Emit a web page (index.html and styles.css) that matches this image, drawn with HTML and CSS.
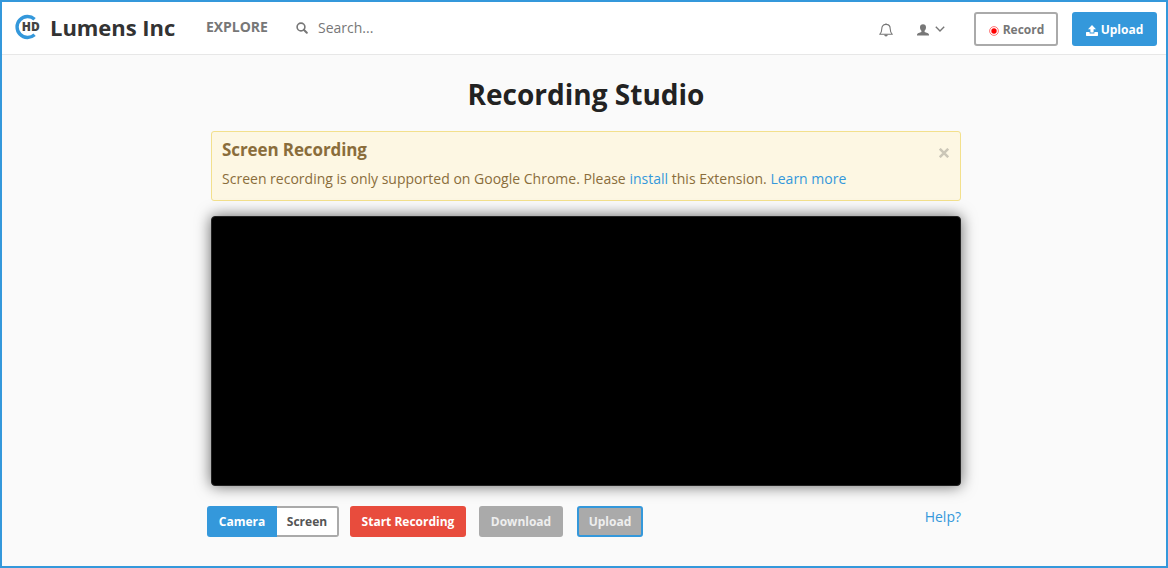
FILE: index.html
```html
<!DOCTYPE html>
<html lang="en">
<head>
<meta charset="utf-8">
<title>Recording Studio</title>
<link rel="stylesheet" href="styles.css">
</head>
<body>
<div class="app">
  <header class="topbar">
    <svg class="logo" viewBox="0 0 26 26" width="26" height="26">
      <path d="M20.6 5.2A10.5 10.5 0 1 0 20.6 20.8" fill="none" stroke="#3498db" stroke-width="3.4"/>
      <text class="logo-text" x="7.8" y="17.2" textLength="18" lengthAdjust="spacingAndGlyphs">HD</text>
    </svg>
    <span class="brand">Lumens Inc</span>
    <a class="explore">EXPLORE</a>
    <svg class="search-icon" viewBox="0 0 12 12" width="12" height="12">
      <circle cx="5" cy="5" r="3.9" fill="none" stroke="#777" stroke-width="1.6"/>
      <path d="M7.8 7.8L10.8 10.8" stroke="#777" stroke-width="2" stroke-linecap="round"/>
    </svg>
    <span class="search">Search...</span>
    <svg class="bell" viewBox="0 0 14 14" width="14" height="14">
      <path d="M7 .3V1.3M.7 11.3C2.3 9.9 2.8 8.5 2.8 5.8C2.8 3 4.3 1.4 7 1.4S11.2 3 11.2 5.8C11.2 8.5 11.7 9.9 13.3 11.3Z" fill="none" stroke="#777" stroke-width="1.1" stroke-linejoin="round"/>
      <path d="M5.2 11.8a1.8 1.8 0 0 0 3.6 0z" fill="#777"/>
    </svg>
    <svg class="user" viewBox="0 0 12 12" width="12" height="12">
      <path d="M6 .2C7.9.2 9 1.4 9 3.3C9 4.9 8.5 6 7.6 6.8V7.9L11 9.3Q12 9.8 12 10.8V11.6H0V10.8Q0 9.8 1 9.3L4.4 7.9V6.8C3.5 6 3 4.9 3 3.3C3 1.4 4.1.2 6 .2Z" fill="#777"/>
    </svg>
    <svg class="chevron" viewBox="0 0 10 6" width="10" height="6">
      <path d="M.8.8L5 4.9L9.2.8" fill="none" stroke="#777" stroke-width="1.4"/>
    </svg>
    <button class="btn btn-record">
      <svg viewBox="0 0 10 10" width="10" height="10">
        <circle cx="5" cy="5" r="4.4" fill="#fff" stroke="#f66" stroke-width=".9"/>
        <circle cx="5" cy="5" r="2.7" fill="#f00"/>
      </svg>
      <span>Record</span>
    </button>
    <button class="btn btn-upload">
      <svg viewBox="0 0 12 11" width="12" height="11">
        <path d="M6 0L10 4.3H7.6V7.5H4.4V4.3H2Z" fill="#fff"/>
        <path d="M.6 7.1H3.6V8.4H8.4V7.1H11.4Q12 7.1 12 7.7V10.3Q12 10.9 11.4 10.9H.6Q0 10.9 0 10.3V7.7Q0 7.1.6 7.1Z" fill="#fff"/>
      </svg>
      <span>Upload</span>
    </button>
  </header>
  <main class="studio">
    <h1 class="title">Recording Studio</h1>
    <section class="notice">
      <div>
        <h2 class="notice-title">Screen Recording</h2>
        <p class="notice-text">Screen recording is only supported on Google Chrome. Please <a class="link">install</a> this Extension. <a class="link">Learn more</a></p>
      </div>
      <svg class="close" viewBox="0 0 10 10" width="10" height="10">
        <path d="M.8 .8L9.2 9.2M9.2 .8L.8 9.2" stroke="#cbc6b7" stroke-width="2.5"/>
      </svg>
    </section>
    <div class="video"></div>
    <div class="controls">
      <button class="btn btn-camera">Camera</button>
      <button class="btn btn-screen">Screen</button>
      <button class="btn btn-start">Start Recording</button>
      <button class="btn btn-download">Download</button>
      <button class="btn btn-send">Upload</button>
      <a class="link help">Help?</a>
    </div>
  </main>
</div>
</body>
</html>
```
FILE: styles.css
```css
* { box-sizing: border-box; }
body {
  margin: 0;
  font-family: "Open Sans", "Noto Sans", sans-serif;
  font-size: 14px;
  color: #777;
}
.app {
  width: 1168px;
  height: 568px;
  border: 2px solid #3498db;
  background: #fafafa;
  overflow: hidden;
}
.topbar {
  display: flex;
  align-items: flex-start;
  height: 53px;
  padding: 0 9px 0 12px;
  background: #fff;
  border-bottom: 1px solid #e7e7e7;
  white-space: nowrap;
}
.logo { margin-top: 12px; flex: none; }
.logo-text { font: 800 11.5px "Open Sans", sans-serif; fill: #444; }
.brand {
  flex: none;
  width: 166px;
  padding-left: 10px;
  margin-top: 10px;
  font-size: 22px;
  line-height: 30px;
  font-weight: 700;
  letter-spacing: -.05px;
  color: #333;
}
.explore { flex: none; width: 90px; margin-top: 15px; line-height: 20px; font-weight: 700; letter-spacing: -.05px; }
.search-icon { margin-top: 20px; margin-right: 10px; }
.search { margin-top: 16px; line-height: 20px; }
.bell { margin: 21px 24px 0 auto; }
.user { margin: 22px 6px 0 0; }
.chevron { margin: 24px 29px 0 0; }
.btn {
  display: flex;
  align-items: center;
  justify-content: center;
  height: 31px;
  padding: 0;
  border: 2px solid transparent;
  border-radius: 3px;
  font: 700 12px/18px "Open Sans", "Noto Sans", sans-serif;
  white-space: nowrap;
}
.topbar .btn { height: 34px; margin-top: 10px; padding-top: 1px; gap: 4px; }
.topbar .btn svg { margin-top: 2px; }
.topbar .btn-record { padding-left: 1px; }
.btn-record { width: 84px; margin-right: 14px; border-color: #aaa; background: #fff; color: #777; }
.btn-upload { width: 85px; background: #3498db; color: #fff; }
.topbar .btn-upload { gap: 3px; }
.studio { width: 750px; margin: 0 auto; position: relative; left: 2px; }
.title {
  margin: 19px 0 16px;
  font-size: 28px;
  line-height: 41px;
  font-weight: 700;
  text-align: center;
  color: #222;
}
.notice {
  display: flex;
  justify-content: space-between;
  height: 70px;
  padding: 8px 11px 0 10px;
  border: 1px solid #f3e08c;
  border-radius: 3px;
  background: #fdf7e3;
  color: #8a6d3b;
}
.notice-title { margin: 0 0 9px; font-size: 17px; line-height: 20px; font-weight: 700; letter-spacing: -.1px; }
.notice-text { margin: 0; line-height: 20px; letter-spacing: .01px; }
.close { margin-top: 8px; }
.link { color: #3498db; }
.video {
  height: 270px;
  margin-top: 15px;
  border: 1px solid #222;
  border-radius: 4px;
  background: #000;
  box-shadow: 0 0 15px rgba(0, 0, 0, .6);
}
.controls { display: flex; margin: 20px 0 0 -4px; }
.btn-camera { width: 70px; border-radius: 3px 0 0 3px; background: #3498db; color: #fff; }
.btn-screen { width: 62px; margin-right: 11px; border-color: #aaa; border-left: 0; border-radius: 0 3px 3px 0; background: #fff; color: #555; }
.btn-start { width: 116px; margin-right: 13px; background: #e84c3d; color: #fff; }
.btn-download { width: 84px; margin-right: 14px; background: #aaa; color: #eee; }
.btn-send { width: 66px; border-color: #3498db; background: #aaa; color: #eee; }
.help { margin: 1px 0 0 auto; line-height: 20px; }
```
